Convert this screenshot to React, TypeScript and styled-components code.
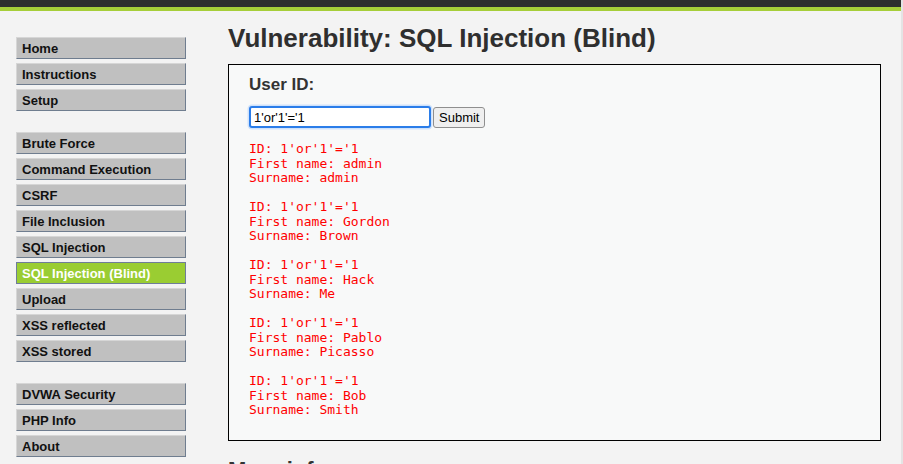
import styled, { createGlobalStyle } from 'styled-components';

const GlobalStyle = createGlobalStyle`
  html, body {
    margin: 0;
    padding: 0;
    background: #f3f3f3;
    font-family: "Liberation Sans", Arial, sans-serif;
    overflow: hidden;
  }
`;

const Page = styled.div`
  width: 901px;
  height: 464px;
  border-right: 2px solid #e4e4e4;
  overflow: hidden;
`;

const TopBar = styled.div`
  height: 7px;
  background: #2e2e2e;
`;

const GreenBar = styled.div`
  height: 4px;
  background: #a6ce39;
`;

const Body = styled.div`
  display: flex;
  gap: 42px;
  padding-left: 16px;
`;

const Sidebar = styled.nav`
  width: 170px;
  padding-top: 26px;
  display: flex;
  flex-direction: column;
  gap: 21px;
`;

const MenuGroup = styled.ul`
  list-style: none;
  margin: 0;
  padding: 0;
  display: flex;
  flex-direction: column;
  gap: 4px;
`;

const MenuItem = styled.li<{ $active?: boolean }>`
  box-sizing: border-box;
  height: 22px;
  padding-left: 5px;
  display: flex;
  align-items: center;
  font-size: 13px;
  font-weight: bold;
  color: ${(p) => (p.$active ? '#ffffff' : '#111111')};
  background: ${(p) => (p.$active ? '#9acd32' : '#c0c0c0')};
  border: 1px solid;
  border-color: ${(p) =>
    p.$active ? '#6f7d99' : '#d6d6d6 #6f7d8f #6f7d8f #d6d6d6'};
`;

const Content = styled.main`
  width: 653px;
`;

const Title = styled.h1`
  margin: 12px 0 11px;
  font-size: 26px;
  line-height: 30px;
  font-weight: bold;
  color: #2f2f2f;
`;

const VulnBox = styled.div`
  box-sizing: border-box;
  height: 377px;
  border: 1.5px solid #000;
  background: #f8f9f9;
  padding: 9px 20px 0 20px;
`;

const Label = styled.h3`
  margin: 0;
  font-size: 17px;
  line-height: 22px;
  font-weight: bold;
  color: #333;
`;

const FormRow = styled.form`
  display: flex;
  align-items: center;
  gap: 2px;
  margin-top: 10px;
`;

const TextInput = styled.input`
  box-sizing: border-box;
  width: 182px;
  height: 22px;
  padding: 0 3px;
  font-family: "Liberation Sans", Arial, sans-serif;
  font-size: 13px;
  color: #000;
  background: #fff;
  border: 2px solid #2b7de9;
  border-radius: 3px;
  box-shadow: 0 0 0 1.5px #cfe2fb;
  outline: none;
`;

const SubmitButton = styled.button`
  box-sizing: border-box;
  height: 21px;
  padding: 0 5px;
  font-family: "Liberation Sans", Arial, sans-serif;
  font-size: 13px;
  color: #000;
  background: #efefef;
  border: 1px solid #8f8f8f;
  border-radius: 3px;
`;

const Results = styled.div`
  margin-top: 14px;
  display: flex;
  flex-direction: column;
  gap: 14.5px;
`;

const Result = styled.pre`
  margin: 0;
  font-family: "DejaVu Sans Mono", "Liberation Mono", monospace;
  font-size: 13px;
  line-height: 14.5px;
  color: #ff0000;
`;

const MoreInfo = styled.h2`
  margin: 16px 0 0;
  font-size: 22px;
  line-height: 26px;
  font-weight: bold;
  color: #333;
`;

const groups = [
  ['Home', 'Instructions', 'Setup'],
  [
    'Brute Force',
    'Command Execution',
    'CSRF',
    'File Inclusion',
    'SQL Injection',
    'SQL Injection (Blind)',
    'Upload',
    'XSS reflected',
    'XSS stored',
  ],
  ['DVWA Security', 'PHP Info', 'About'],
];

const users = [
  ['admin', 'admin'],
  ['Gordon', 'Brown'],
  ['Hack', 'Me'],
  ['Pablo', 'Picasso'],
  ['Bob', 'Smith'],
];

const App = () => {
  const id = "1'or'1'='1";
  return (
    <>
      <GlobalStyle />
      <Page>
        <TopBar />
        <GreenBar />
        <Body>
          <Sidebar>
            {groups.map((g, i) => (
              <MenuGroup key={i}>
                {g.map((item) => (
                  <MenuItem key={item} $active={item === 'SQL Injection (Blind)'}>
                    {item}
                  </MenuItem>
                ))}
              </MenuGroup>
            ))}
          </Sidebar>
          <Content>
            <Title>Vulnerability: SQL Injection (Blind)</Title>
            <VulnBox>
              <Label>User ID:</Label>
              <FormRow onSubmit={(e) => e.preventDefault()}>
                <TextInput type="text" defaultValue={id} />
                <SubmitButton type="submit">Submit</SubmitButton>
              </FormRow>
              <Results>
                {users.map(([first, last]) => (
                  <Result key={first}>
                    {`ID: ${id}\nFirst name: ${first}\nSurname: ${last}`}
                  </Result>
                ))}
              </Results>
            </VulnBox>
            <MoreInfo>More info</MoreInfo>
          </Content>
        </Body>
      </Page>
    </>
  );
};

export default App;
